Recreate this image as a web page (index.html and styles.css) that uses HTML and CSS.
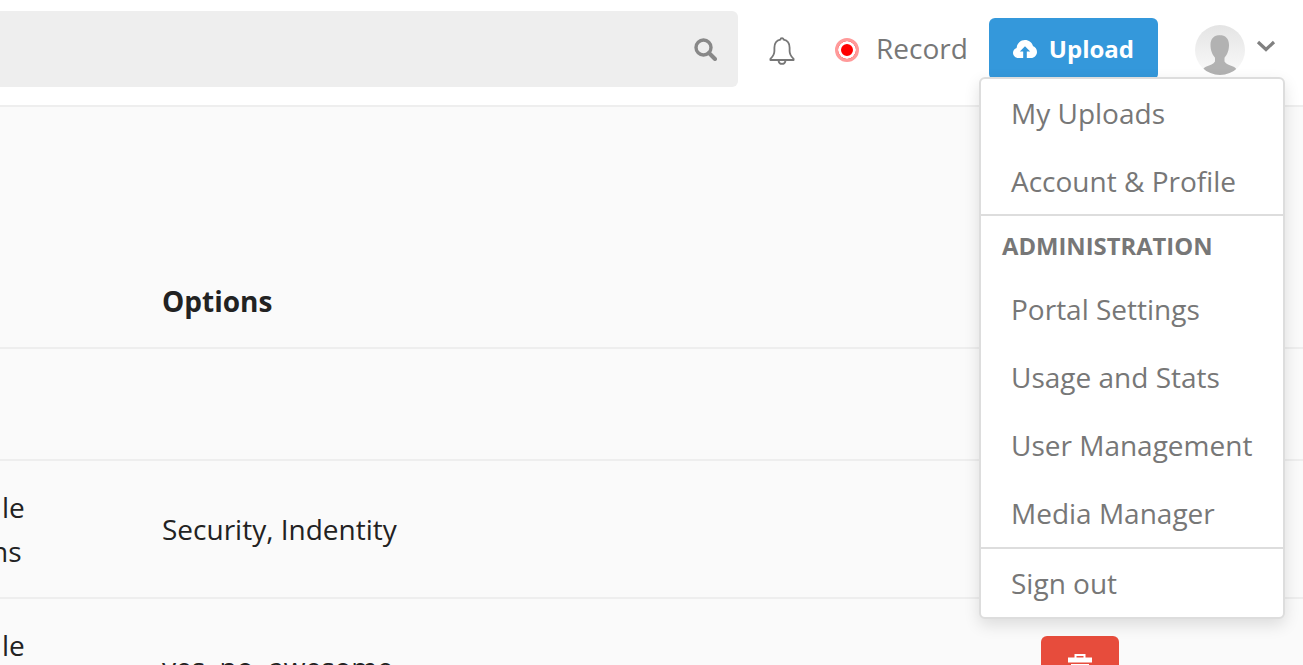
FILE: index.html
```html
<!DOCTYPE html>
<html>
	<head>
		<meta charset="utf-8" />
		<title>Media portal</title>
		<link rel="stylesheet" href="styles.css">
	</head>
	<body>
		<article class="page">
			<header class="topbar">
				<div class="search">
					<svg class="search-icon" viewBox="0 0 24 24" width="24" height="24">
						<circle cx="10.5" cy="10.5" r="7.5" fill="none" stroke="#888" stroke-width="3.4"/>
						<path d="M16 16l6 6" fill="none" stroke="#888" stroke-width="4" stroke-linecap="round"/>
					</svg>
				</div>
				<a class="bell" href="javascript:">
					<svg viewBox="0 0 28 30" width="28" height="30">
						<path d="M14 3.2c-1 0-1.600.6-1.600 1.500-3.900.8-6 3.900-6 8v3.300c0 3.600-1.700 5.700-4 7.800v1.200h23.200v-1.200c-2.300-2.100-4-4.200-4-7.800v-3.300c0-4.100-2.100-7.200-6-8 0-.9-.6-1.500-1.600-1.500z" fill="none" stroke="#777" stroke-width="1.800" stroke-linejoin="round"/>
						<path d="M10.500 26c.4 1.800 1.800 2.900 3.500 2.900s3.100-1.100 3.500-2.900" fill="none" stroke="#777" stroke-width="1.800"/>
					</svg>
				</a>
				<a class="record" href="javascript:"><span class="record-dot"></span><span class="record-text">Record</span></a>
				<a class="upload" href="javascript:">
					<svg viewBox="0 0 24 18" width="24" height="18">
						<path d="M5.500 18C2.400 18 0 15.700 0 12.800c0-2.300 1.500-4.200 3.600-4.900C4 3.400 7.600 0 12 0c3.800 0 7 2.500 8 6 .1.300-.1 0 0 .1 2.300.9 4 3.100 4 5.900 0 3.300-2.700 6-6 6z" fill="#fff"/>
						<path d="M12 6.200l-5.200 5.400h3.400V18h3.600v-6.400h3.400z" fill="#3498db"/>
					</svg>
					Upload
				</a>
				<a class="user" href="javascript:">
					<svg class="avatar" viewBox="0 0 50 50" width="50" height="50">
						<defs>
							<linearGradient id="avatarBg" x1="0" y1="0" x2="0" y2="1">
								<stop offset="0" stop-color="#e4e4e4"/>
								<stop offset="1" stop-color="#fafafa"/>
							</linearGradient>
							<clipPath id="avatarClip"><circle cx="25" cy="25" r="25"/></clipPath>
						</defs>
						<circle cx="25" cy="25" r="25" fill="url(#avatarBg)"/>
						<g clip-path="url(#avatarClip)" fill="#b2b2b2">
							<path d="M25 10c-6 0-9.500 3.800-9.500 10 0 2 .3 4.500 1 6.500.8 2.800 2.500 5 3.500 6.200v3.800c-1.500 2.800-5 3.800-8.500 5-1.500.6-3 1.800-3.800 3.500L25 54l16.800-9c-.8-1.700-2.300-2.900-3.800-3.500-3.500-1.200-7-2.200-8.500-5v-3.800c1-1.200 2.700-3.400 3.500-6.200.7-2 1-4.500 1-6.500 0-6.200-3.500-10-9.500-10z"/>
						</g>
					</svg>
					<svg class="chevron" viewBox="0 0 20 12" width="20" height="12">
						<path d="M2 2l8 7.500L18 2" fill="none" stroke="#808080" stroke-width="3.200"/>
					</svg>
				</a>
			</header>

			<section class="table">
				<div class="row row-head">
					<div></div>
					<div class="cell-head">Options</div>
					<div></div>
				</div>
				<div class="row row-empty"></div>
				<div class="row row-body">
					<div class="cut"><p>le</p><p class="cut-ns">ns</p></div>
					<div>Security, Indentity</div>
					<a class="btn-delete" href="javascript:"><svg viewBox="0 0 24 28" width="24" height="28"><path d="M7.500 5V1h9v4" fill="none" stroke="#fff" stroke-width="2"/><path d="M0 6h24" stroke="#fff" stroke-width="5"/><path d="M3 10h18v18H3z" fill="#fff"/></svg></a>
				</div>
				<div class="row row-body">
					<div class="cut"><p>le</p><p class="cut-ns">ns</p></div>
					<div>yes, no, awesome</div>
					<a class="btn-delete" href="javascript:"><svg viewBox="0 0 24 28" width="24" height="28"><path d="M7.500 5V1h9v4" fill="none" stroke="#fff" stroke-width="2"/><path d="M0 6h24" stroke="#fff" stroke-width="5"/><path d="M3 10h18v18H3z" fill="#fff"/></svg></a>
				</div>
			</section>

			<nav class="menu">
				<ul class="menu-group menu-top">
					<li>My Uploads</li>
					<li>Account &amp; Profile</li>
				</ul>
				<ul class="menu-group menu-admin">
					<li class="menu-title">ADMINISTRATION</li>
					<li>Portal Settings</li>
					<li>Usage and Stats</li>
					<li>User Management</li>
					<li>Media Manager</li>
				</ul>
				<ul class="menu-group">
					<li class="menu-last">Sign out</li>
				</ul>
			</nav>
		</article>
	</body>
</html>
```

FILE: styles.css
```css
*{margin: 0;padding: 0;box-sizing: border-box;}
html,body{height: 100%;overflow: hidden;}
body{
	font-family: "Open Sans","Noto Sans",sans-serif;
	font-size: 28px;
	color: #222;
	background: #fafafa;
}
a{
	text-decoration: none;
	color: #777;
}
li{
	list-style: none;
}
.page{
	position: relative;
	height: 100%;
	overflow: hidden;
}

/* top bar */
.topbar{
	display: flex;
	align-items: center;
	height: 107px;
	padding: 11px 0 19px;
	background: #fff;
	border-bottom: 2px solid #eee;
}
.search{
	display: flex;
	align-items: center;
	justify-content: flex-end;
	width: 738px;
	height: 76px;
	padding-right: 21px;
	background: #eee;
	border-radius: 0 6px 6px 0;
}
.bell{
	display: flex;
	margin-left: 30px;
	margin-top: 3px;
}
.record{
	display: flex;
	align-items: center;
	margin-left: 39px;
}
.record-dot{
	width: 24px;
	height: 24px;
	margin-right: 17px;
	margin-top: 3px;
	border-radius: 50%;
	background: #f00;
	border: 3px solid #ff9a9a;
	box-shadow: inset 0 0 0 3px #fff;
}
.record-text{
	margin-top: -2px;
}
.upload{
	display: flex;
	align-items: center;
	gap: 12px;
	width: 169px;
	height: 62px;
	margin-left: 21px;
	padding-left: 24px;
	font-size: 24px;
	font-weight: 700;
	color: #fff;
	background: #3498db;
	border-radius: 6px;
}
.user{
	display: flex;
	align-items: flex-start;
	margin-left: 37px;
	margin-top: 2px;
}
.chevron{
	margin: 15px 0 0 11px;
}

/* table */
.row{
	display: grid;
	grid-template-columns: 162px 879px 78px;
	align-items: center;
	border-bottom: 2px solid #eee;
}
.row-head{
	height: 242px;
	align-items: end;
	padding-bottom: 27px;
}
.cell-head{
	font-weight: 700;
}
.row-empty{
	height: 112px;
}
.row-body{
	height: 138px;
}
.cut{
	line-height: 44px;
	margin-left: 2px;
}
.cut-ns{
	margin-left: -11px;
}
.btn-delete{
	display: flex;
	justify-content: center;
	align-items: flex-start;
	height: 64px;
	margin-top: 2px;
	padding-top: 18px;
	background: #e74c3c;
	border-radius: 6px;
}

/* user menu */
.menu{
	position: absolute;
	top: 77px;
	left: 979px;
	width: 306px;
	height: 542px;
	background: #fff;
	border: 2px solid #ddd;
	border-radius: 6px;
	box-shadow: 0 6px 16px rgba(0,0,0,0.12);
	color: #777;
}
.menu-group{
	border-bottom: 2px solid #ddd;
}
.menu-group:last-child{
	border-bottom: 0;
}
.menu-top{
	height: 137px;
}
.menu-admin{
	height: 333px;
}
.menu-group li{
	height: 68px;
	padding-left: 30px;
	line-height: 68px;
}
.menu-group .menu-title{
	height: 59px;
	padding-left: 21px;
	line-height: 61px;
	font-size: 23.800px;
	font-weight: 700;
}
.menu-group .menu-last{
	height: 68px;
	line-height: 68px;
}
```
